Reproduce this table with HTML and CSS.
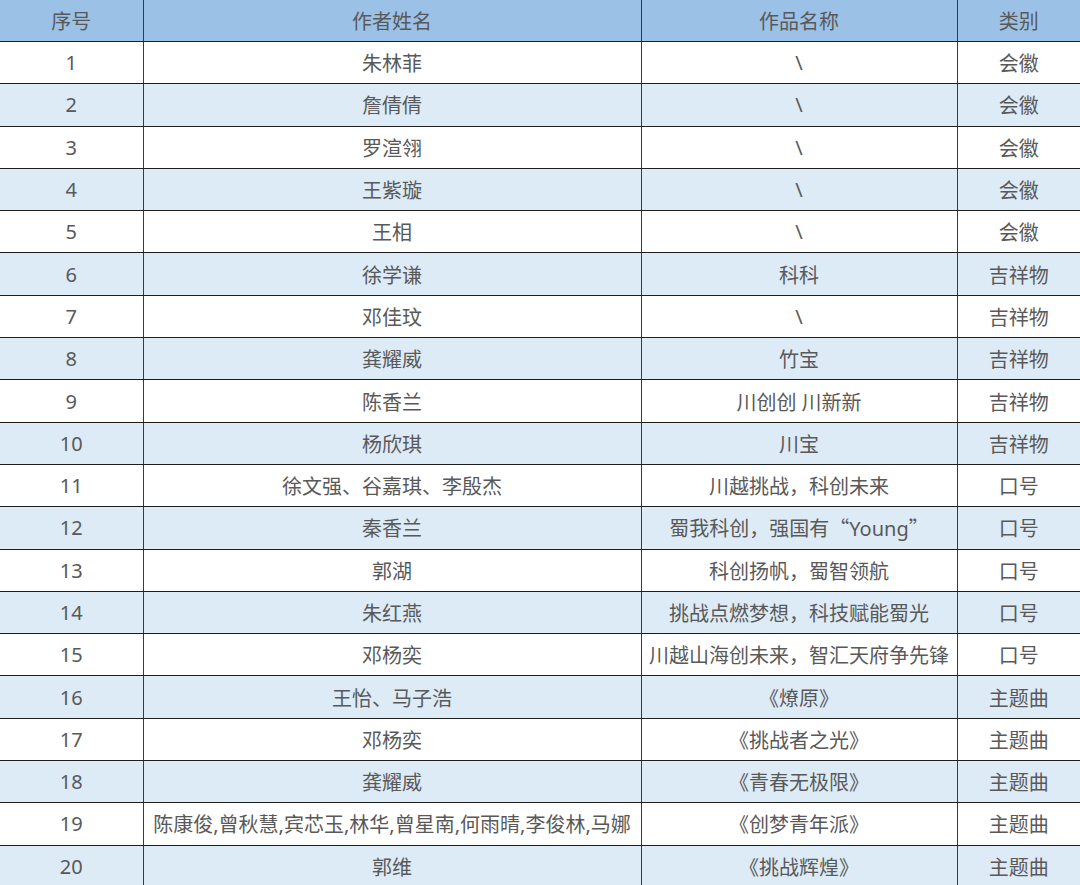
FILE: index.html
```html
<!DOCTYPE html>
<html lang="zh-CN">
<head>
<meta charset="utf-8">
<link rel="stylesheet" href="styles.css">
</head>
<body>
<table class="list">
  <colgroup>
    <col class="c1"><col class="c2"><col class="c3"><col class="c4">
  </colgroup>
  <thead>
    <tr><th>序号</th><th>作者姓名</th><th>作品名称</th><th>类别</th></tr>
  </thead>
  <tbody>
    <tr><td>1</td><td>朱林菲</td><td>\</td><td>会徽</td></tr>
    <tr><td>2</td><td>詹倩倩</td><td>\</td><td>会徽</td></tr>
    <tr><td>3</td><td>罗渲翎</td><td>\</td><td>会徽</td></tr>
    <tr><td>4</td><td>王紫璇</td><td>\</td><td>会徽</td></tr>
    <tr><td>5</td><td>王相</td><td>\</td><td>会徽</td></tr>
    <tr><td>6</td><td>徐学谦</td><td>科科</td><td>吉祥物</td></tr>
    <tr><td>7</td><td>邓佳玟</td><td>\</td><td>吉祥物</td></tr>
    <tr><td>8</td><td>龚耀威</td><td>竹宝</td><td>吉祥物</td></tr>
    <tr><td>9</td><td>陈香兰</td><td>川创创 川新新</td><td>吉祥物</td></tr>
    <tr><td>10</td><td>杨欣琪</td><td>川宝</td><td>吉祥物</td></tr>
    <tr><td>11</td><td>徐文强、谷嘉琪、李殷杰</td><td>川越挑战，科创未来</td><td>口号</td></tr>
    <tr><td>12</td><td>秦香兰</td><td>蜀我科创，强国有<span class="cjk">“</span>Young<span class="cjk">”</span></td><td>口号</td></tr>
    <tr><td>13</td><td>郭湖</td><td>科创扬帆，蜀智领航</td><td>口号</td></tr>
    <tr><td>14</td><td>朱红燕</td><td>挑战点燃梦想，科技赋能蜀光</td><td>口号</td></tr>
    <tr><td>15</td><td>邓杨奕</td><td>川越山海创未来，智汇天府争先锋</td><td>口号</td></tr>
    <tr><td>16</td><td>王怡、马子浩</td><td>《燎原》</td><td>主题曲</td></tr>
    <tr><td>17</td><td>邓杨奕</td><td>《挑战者之光》</td><td>主题曲</td></tr>
    <tr><td>18</td><td>龚耀威</td><td>《青春无极限》</td><td>主题曲</td></tr>
    <tr><td>19</td><td>陈康俊,曾秋慧,宾芯玉,林华,曾星南,何雨晴,李俊林,马娜</td><td>《创梦青年派》</td><td>主题曲</td></tr>
    <tr><td>20</td><td>郭维</td><td>《挑战辉煌》</td><td>主题曲</td></tr>
  </tbody>
</table>
</body>
</html>
```
FILE: styles.css
```css
html, body {
  margin: 0;
  padding: 0;
  background: #ffffff;
}
.list {
  width: 1080px;
  border-collapse: collapse;
  table-layout: fixed;
  font-family: "Noto Sans", "Noto Sans CJK SC", sans-serif;
  font-size: 20px;
  color: #595959;
}
.c1 { width: 143px; }
.c2 { width: 498px; }
.c3 { width: 316px; }
.c4 { width: 123px; }
.list th, .list td {
  padding: 0;
  text-align: center;
  vertical-align: middle;
  border-bottom: 1px solid #1e1e1e;
  border-left: 1px solid #3a3a3a;
  white-space: nowrap;
  overflow: hidden;
  font-weight: normal;
}
.list th:first-child, .list td:first-child { border-left: none; }
.list thead th {
  background: #9bc2e6;
  height: 41px;
}
.list tbody tr { height: 42.3px; }
.list tbody tr:nth-child(even) td { background: #ddebf7; }
.list tbody tr:last-child td { border-bottom: none; }
.cjk {
  font-family: "Noto Sans CJK SC", sans-serif;
}
```
